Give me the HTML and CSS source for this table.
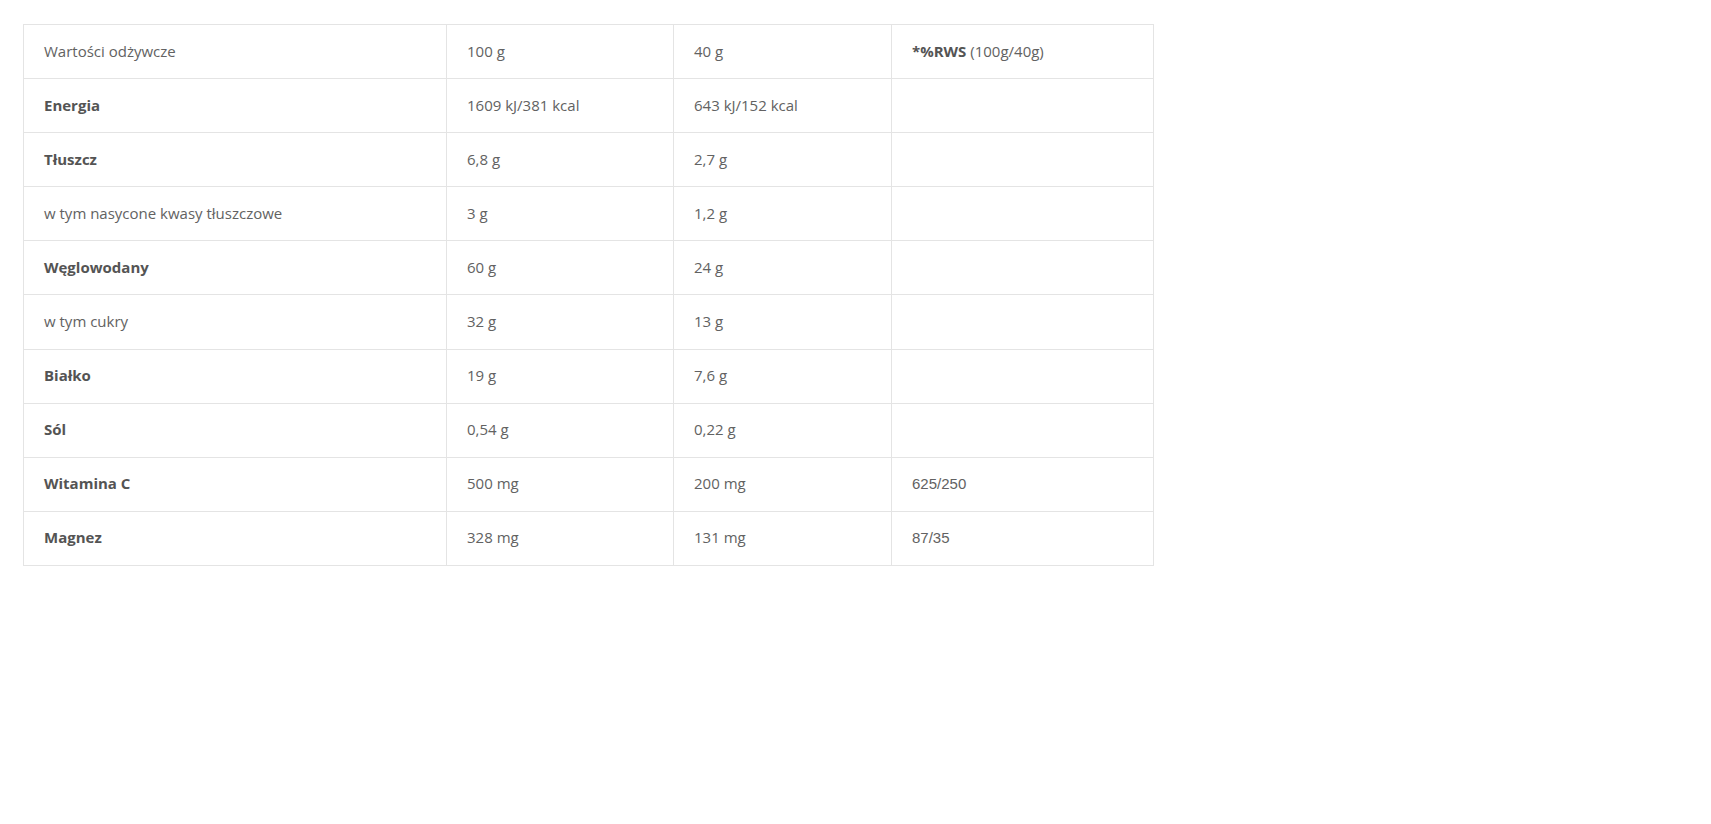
FILE: index.html
```html
<!DOCTYPE html>
<html lang="pl">
<head>
<meta charset="utf-8">
<title>Wartości odżywcze</title>
<link rel="stylesheet" href="styles.css">
</head>
<body>
<div class="wrap">
<table class="nutri">
<colgroup>
<col class="c1"><col class="c2"><col class="c3"><col class="c4">
</colgroup>
<tbody>
<tr><td>Wartości odżywcze</td><td>100 g</td><td>40 g</td><td><b>*%RWS</b> (100g/40g)</td></tr>
<tr><td><b>Energia</b></td><td>1609 kJ/381 kcal</td><td>643 kJ/152 kcal</td><td></td></tr>
<tr><td><b>Tłuszcz</b></td><td>6,8 g</td><td>2,7 g</td><td></td></tr>
<tr><td>w tym nasycone kwasy tłuszczowe</td><td>3 g</td><td>1,2 g</td><td></td></tr>
<tr><td><b>Węglowodany</b></td><td>60 g</td><td>24 g</td><td></td></tr>
<tr><td>w tym cukry</td><td>32 g</td><td>13 g</td><td></td></tr>
<tr><td><b>Białko</b></td><td>19 g</td><td>7,6 g</td><td></td></tr>
<tr><td><b>Sól</b></td><td>0,54 g</td><td>0,22 g</td><td></td></tr>
<tr><td><b>Witamina C</b></td><td>500 mg</td><td>200 mg</td><td class="num">625/250</td></tr>
<tr><td><b>Magnez</b></td><td>328 mg</td><td>131 mg</td><td class="num">87/35</td></tr>
</tbody>
</table>
</div>
</body>
</html>
```

FILE: styles.css
```css
html, body {
  margin: 0;
  padding: 0;
  background: #fff;
}
.wrap {
  padding: 24px 0 0 23px;
}
.nutri {
  border-collapse: collapse;
  table-layout: fixed;
  width: 1130px;
  font-family: "Open Sans", "Liberation Sans", sans-serif;
  font-size: 15px;
  color: #626262;
}
.c1 { width: 423px; }
.c2 { width: 227px; }
.c3 { width: 218px; }
.c4 { width: 262px; }
.nutri td {
  border: 1px solid #e4e4e4;
  height: 54.1px;
  box-sizing: border-box;
  padding: 0 20px 2px;
  vertical-align: middle;
  line-height: 20px;
}
.nutri b {
  font-weight: 700;
  color: #545454;
}
.nutri td.num {
  font-family: "Liberation Sans", Arial, sans-serif;
  font-size: 15px;
  padding-bottom: 0;
}
```
